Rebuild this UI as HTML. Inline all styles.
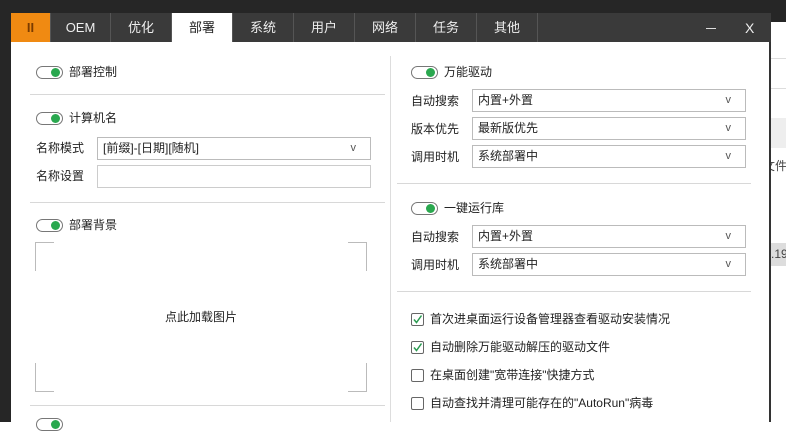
<!DOCTYPE html>
<html><head><meta charset="utf-8"><style>
*{margin:0;padding:0;box-sizing:border-box}
body{width:786px;height:422px;overflow:hidden;position:relative;background:#fff;font-family:"Liberation Sans","Noto Sans CJK SC",sans-serif;font-size:12px;color:#222}
.a{position:absolute;white-space:nowrap}
.tab{position:absolute;top:13px;height:29px;line-height:29px;text-align:center;color:#eee;font-size:13px;border-right:1px solid #555}
.tg{position:absolute;width:27px;height:13px;border:1px solid #777;border-radius:7px;background:#fff}
.tg:after{content:"";position:absolute;right:2px;top:1px;width:9px;height:9px;border-radius:50%;background:#2aa84f}
.lb{position:absolute;font-size:12px;line-height:14px;white-space:nowrap}
.sel{position:absolute;height:23px;border:1px solid #bbb;background:#fff;line-height:21px;padding-left:5px;font-size:12px}
.sel.v:after{content:"v";position:absolute;right:14px;top:0;color:#555;font-size:11px}
.hl{position:absolute;height:1px;background:#d8d8d8}
.cb{position:absolute;width:13px;height:13px;border:1px solid #666;border-radius:2px;background:#fff}
</style></head><body>
<div class="a" style="left:0;top:0;width:786px;height:22px;background:#262626"></div>
<div class="a" style="left:0;top:0;width:11px;height:422px;background:#262626"></div>
<div class="a" style="left:771px;top:58px;width:15px;height:1px;background:#ddd"></div>
<div class="a" style="left:771px;top:88px;width:15px;height:1px;background:#ddd"></div>
<div class="a" style="left:771px;top:118px;width:15px;height:30px;background:#eee"></div>
<div class="a" style="left:763px;top:157px;font-size:12px;color:#444">文件</div>
<div class="a" style="left:771px;top:243px;width:15px;height:23px;background:#ddd;font-size:12px;line-height:23px;color:#444">.19</div>
<div class="a" style="left:11px;top:13px;width:760px;height:409px;background:#fff;border-right:2px solid #333"></div>
<div class="a" style="left:11px;top:13px;width:760px;height:29px;background:#3a3a3a"></div>
<div class="tab" style="left:11px;width:40px;background:#f08a12;color:#7a3b00;font-weight:bold">II</div>
<div class="tab" style="left:51px;width:60px">OEM</div>
<div class="tab" style="left:111px;width:61px">优化</div>
<div class="tab" style="left:172px;width:61px;background:#fff;color:#222">部署</div>
<div class="tab" style="left:233px;width:61px">系统</div>
<div class="tab" style="left:294px;width:61px">用户</div>
<div class="tab" style="left:355px;width:61px">网络</div>
<div class="tab" style="left:416px;width:61px">任务</div>
<div class="tab" style="left:477px;width:61px">其他</div>
<div class="a" style="left:706px;top:28px;width:10px;height:1px;background:#ddd"></div>
<div class="a" style="left:745px;top:20px;color:#eee;font-size:14px">X</div>
<div class="a" style="left:390px;top:56px;width:1px;height:366px;background:#ddd"></div>

<div class="tg" style="left:36px;top:66px"></div><div class="lb" style="left:69px;top:65px">部署控制</div>
<div class="hl" style="left:30px;top:94px;width:355px"></div>
<div class="tg" style="left:36px;top:112px"></div><div class="lb" style="left:69px;top:111px">计算机名</div>
<div class="lb" style="left:36px;top:141px">名称模式</div>
<div class="sel v" style="left:97px;top:137px;width:274px">[前缀]-[日期][随机]</div>
<div class="lb" style="left:36px;top:169px">名称设置</div>
<div class="sel" style="left:97px;top:165px;width:274px;border-color:#ccc"></div>
<div class="hl" style="left:30px;top:202px;width:355px"></div>
<div class="tg" style="left:36px;top:219px"></div><div class="lb" style="left:69px;top:218px">部署背景</div>
<div class="a" style="left:35px;top:242px;width:19px;height:29px;border-left:1px solid #bbb;border-top:1px solid #bbb"></div>
<div class="a" style="left:348px;top:242px;width:19px;height:29px;border-right:1px solid #bbb;border-top:1px solid #bbb"></div>
<div class="a" style="left:35px;top:363px;width:19px;height:29px;border-left:1px solid #bbb;border-bottom:1px solid #bbb"></div>
<div class="a" style="left:348px;top:363px;width:19px;height:29px;border-right:1px solid #bbb;border-bottom:1px solid #bbb"></div>
<div class="lb" style="left:165px;top:310px">点此加载图片</div>
<div class="hl" style="left:30px;top:405px;width:355px"></div>
<div class="tg" style="left:36px;top:418px"></div>

<div class="tg" style="left:411px;top:66px"></div><div class="lb" style="left:444px;top:65px">万能驱动</div>
<div class="lb" style="left:411px;top:94px">自动搜索</div><div class="sel v" style="left:472px;top:89px;width:274px">内置+外置</div>
<div class="lb" style="left:411px;top:122px">版本优先</div><div class="sel v" style="left:472px;top:117px;width:274px">最新版优先</div>
<div class="lb" style="left:411px;top:150px">调用时机</div><div class="sel v" style="left:472px;top:145px;width:274px">系统部署中</div>
<div class="hl" style="left:397px;top:183px;width:354px"></div>
<div class="tg" style="left:411px;top:202px"></div><div class="lb" style="left:444px;top:201px">一键运行库</div>
<div class="lb" style="left:411px;top:230px">自动搜索</div><div class="sel v" style="left:472px;top:225px;width:274px">内置+外置</div>
<div class="lb" style="left:411px;top:258px">调用时机</div><div class="sel v" style="left:472px;top:253px;width:274px">系统部署中</div>
<div class="hl" style="left:397px;top:291px;width:354px"></div>
<div class="cb" style="left:411px;top:313px"><svg width="11" height="11" style="position:absolute;left:0;top:0"><path d="M2 5.5L4.5 8.5L9.5 1.5" stroke="#2a9a50" stroke-width="1.5" fill="none"/></svg></div>
<div class="lb" style="left:430px;top:312px">首次进桌面运行设备管理器查看驱动安装情况</div>
<div class="cb" style="left:411px;top:341px"><svg width="11" height="11" style="position:absolute;left:0;top:0"><path d="M2 5.5L4.5 8.5L9.5 1.5" stroke="#2a9a50" stroke-width="1.5" fill="none"/></svg></div>
<div class="lb" style="left:430px;top:340px">自动删除万能驱动解压的驱动文件</div>
<div class="cb" style="left:411px;top:369px"></div>
<div class="lb" style="left:430px;top:368px">在桌面创建"宽带连接"快捷方式</div>
<div class="cb" style="left:411px;top:397px"></div>
<div class="lb" style="left:430px;top:396px">自动查找并清理可能存在的"AutoRun"病毒</div>
</body></html>
